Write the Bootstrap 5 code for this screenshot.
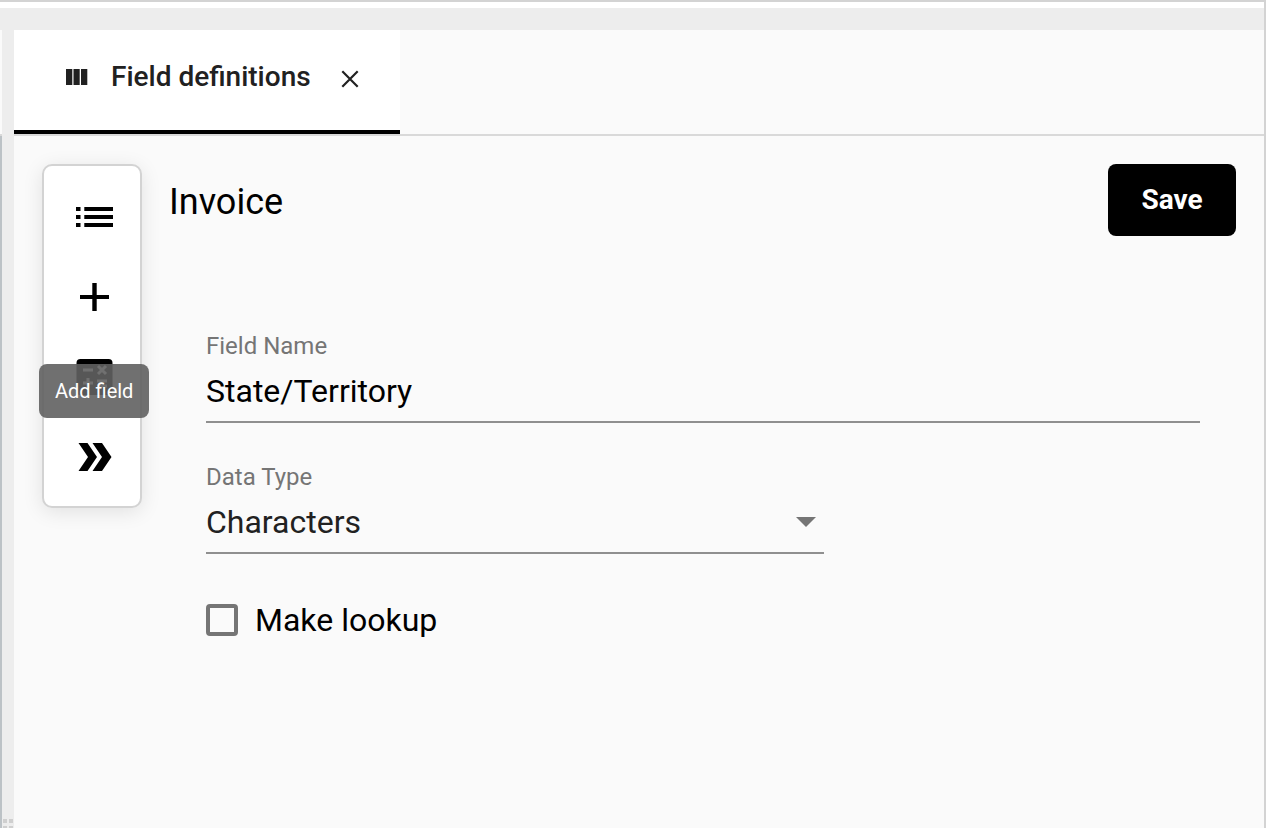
<!DOCTYPE html>
<html lang="en">
<head>
<meta charset="utf-8">
<meta name="viewport" content="width=device-width, initial-scale=1">
<title>Field definitions</title>
<link href="https://cdn.jsdelivr.net/npm/bootstrap@5.3.0/dist/css/bootstrap.min.css" rel="stylesheet">
<style>
  body { font-family: Roboto, "Liberation Sans", sans-serif; color: #000; background: #fff; }
  .app-frame { margin-right: 12px; border: solid #d3d3d3; border-width: 2px 2px 0 0; padding-top: 6px; }
  .top-strip { height: 22px; background: #ededed; }
  .side-edge { width: 2px; background: #bcc2c6; }
  .side-edge-head { height: 106px; background: #fafafa; border-bottom: 2px solid #d9d9d9; }
  .splitter { width: 12px; background: #ededed; overflow: hidden; }
  .grip-dots { display: grid; grid-template: 4px 2px / 4px 4px; gap: 3px 2px; }
  .grip { background: #cfcfcf; }
  .workspace { background: #fafafa; }
  .tab-bar { height: 106px; border-bottom: 2px solid #d9d9d9; }
  .tab-item { width: 386px; padding: 0 40px 6px 52px; background: #fff; border-bottom: 4px solid #000; color: #212121; }
  .tab-link { font-size: 28px; line-height: 32px; font-weight: 500; color: #212121; gap: 23px; }
  .bare-btn { border: 0; background: none; padding: 0; color: inherit; }
  .content-area { padding: 28px; gap: 27px; }
  .tool-rail { width: 100px; padding: 11px 0 9px 4px; background: #fff; border: 2px solid #d3d3d3; border-radius: 10px; box-shadow: 0 4px 20px rgba(0,0,0,.1); }
  .tool-btn { height: 80px; width: 100%; }
  .rail-tip { left: -5px; top: 198px; height: 54px; padding: 0 16px; border-radius: 8px; background: rgba(97,97,97,.9); color: #fff; font-size: 20px; font-weight: 400; white-space: nowrap; }
  .page-title { font-size: 36px; line-height: 44px; font-weight: 400; padding-top: 16px; }
  .save-btn { width: 128px; height: 72px; border-radius: 8px; background: #000; color: #fff; font-size: 28px; font-weight: 700; line-height: 32px; }
  .save-btn:hover { background: #222; color: #fff; }
  .field-form { padding: 96px 36px 0 37px; }
  .field-label { font-size: 24px; line-height: 28px; color: #757575; }
  .field-box { height: 63px; width: 100%; padding: 0; border: 0; border-bottom: 2px solid #8f8f8f; border-radius: 0; background: transparent; font-size: 32px; line-height: 40px; color: #000; outline: 0; }
  .type-field { max-width: 618px; margin-top: 40px; }
  .type-field .field-box { appearance: none; color: #212121; }
  .type-caret { right: 8px; bottom: 27px; pointer-events: none; }
  .lookup-row { margin-top: 46px; gap: 17px; font-size: 32px; line-height: 40px; }
  .lookup-box { appearance: none; width: 32px; height: 32px; margin: 0; border: 4px solid #757575; border-radius: 4px; }
  .lookup-box:checked { background: #757575; }
</style>
</head>
<body>
<div class="app-frame min-vh-100 d-flex flex-column">
  <div class="top-strip"></div>
  <div class="d-flex flex-grow-1">
    <div class="side-edge flex-shrink-0"><div class="side-edge-head"></div></div>
    <div class="splitter flex-shrink-0 d-flex align-items-end justify-content-center">
      <div class="grip-dots"><span class="grip"></span><span class="grip"></span><span class="grip"></span><span class="grip"></span></div>
    </div>
    <main class="workspace flex-grow-1">
      <nav class="tab-bar d-flex" aria-label="Open tabs">
        <div class="tab-item d-flex align-items-center justify-content-between">
          <a href="#fields" class="tab-link d-flex align-items-center text-decoration-none text-nowrap">
            <svg width="22" height="18" viewBox="0 0 22 18" fill="currentColor" aria-hidden="true"><path d="M0 1h6.300v16H0zM7.500 1h6.200v16H7.500zM15 1h6.300v16H15z"/></svg>
            Field definitions
          </a>
          <button type="button" class="bare-btn d-flex pt-1" aria-label="Close tab">
            <svg width="20" height="20" viewBox="0 0 20 20" stroke="currentColor" stroke-width="2.2" aria-hidden="true"><path d="M2.300 2.300l15.400 15.400M17.700 2.300L2.300 17.700"/></svg>
          </button>
        </div>
      </nav>
      <div class="content-area d-flex align-items-start">
        <div class="tool-rail position-relative flex-shrink-0">
          <button type="button" class="bare-btn tool-btn d-flex align-items-center justify-content-center" aria-label="Field list">
            <svg width="38" height="40" viewBox="0 0 38 40" aria-hidden="true"><path d="M1 10h4.500v4H1zM9.300 10H38v4H9.300zM1 18h4.500v4H1zM9.300 18H38v4H9.300zM1 26h4.500v4H1zM9.300 26H38v4H9.300z"/></svg>
          </button>
          <button type="button" class="bare-btn tool-btn d-flex align-items-center justify-content-center" aria-label="Add">
            <svg width="38" height="40" viewBox="0 0 38 40" aria-hidden="true"><path d="M17.300 6h4.400v12H34v4H21.700v12h-4.400V22H5v-4h12.300z"/></svg>
          </button>
          <button type="button" class="bare-btn tool-btn d-flex align-items-center justify-content-center" aria-label="Calculated field">
            <svg width="38" height="40" viewBox="0 0 38 40" aria-hidden="true"><rect x="1.500" y="2" width="36" height="36" rx="4"/><path d="M8 13h10M23 9l8 8M31 9l-8 8M8 26h10M13 21v10M22 24h10M22 29h10" stroke="#fff" stroke-width="3"/></svg>
          </button>
          <button type="button" class="bare-btn tool-btn d-flex align-items-center justify-content-center" aria-label="Expand">
            <svg width="38" height="40" viewBox="0 0 38 40" aria-hidden="true"><path d="M3.500 6h9l9.500 14-9.500 14h-9l9.500-14zM17.500 6h9.500l9.500 14L27 34h-9.500l9.500-14z"/></svg>
          </button>
          <div class="rail-tip position-absolute d-flex align-items-center" role="tooltip">Add field</div>
        </div>
        <section class="flex-grow-1">
          <div class="d-flex justify-content-between align-items-start">
            <h1 class="page-title m-0">Invoice</h1>
            <button type="button" class="btn save-btn border-0 p-0">Save</button>
          </div>
          <form class="field-form">
            <div>
              <label for="fieldName" class="field-label d-block">Field Name</label>
              <input id="fieldName" type="text" class="field-box d-block" value="State/Territory">
            </div>
            <div class="type-field position-relative">
              <label for="dataType" class="field-label d-block">Data Type</label>
              <select id="dataType" class="field-box d-block"><option>Characters</option></select>
              <svg class="type-caret position-absolute" width="20" height="10" viewBox="0 0 20 10" aria-hidden="true"><path d="M0 0h20L10 10z" fill="#757575"/></svg>
            </div>
            <div class="lookup-row d-flex align-items-center">
              <input id="lookup" type="checkbox" class="lookup-box">
              <label for="lookup">Make lookup</label>
            </div>
          </form>
        </section>
      </div>
    </main>
  </div>
</div>
<script src="https://cdn.jsdelivr.net/npm/bootstrap@5.3.0/dist/js/bootstrap.bundle.min.js"></script>
</body>
</html>
